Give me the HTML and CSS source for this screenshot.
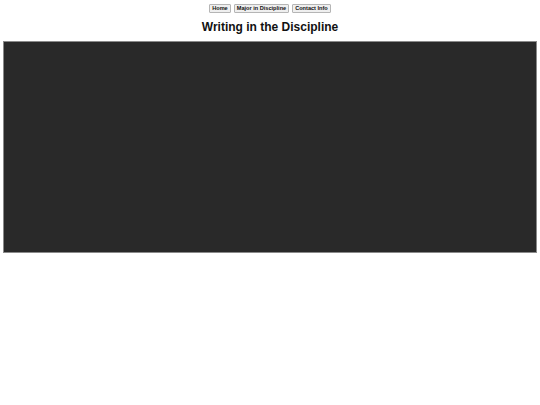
FILE: index.html
```html
<!DOCTYPE html>
<html>
<head>
<meta charset="utf-8">
<link rel="stylesheet" href="styles.css">
</head>
<body>
<nav class="nav">
  <button class="btn">Home</button>
  <button class="btn">Major in Discipline</button>
  <button class="btn">Contact Info</button>
</nav>
<h1 class="title">Writing in the Discipline</h1>
<div class="screen"></div>
</body>
</html>
```
FILE: styles.css
```css
html, body { margin: 0; padding: 0; background: #fff; }
body { font-family: "Liberation Sans", Arial, sans-serif; }
.nav {
  display: flex;
  justify-content: center;
  gap: 3px;
  padding-top: 4px;
}
.btn {
  font-family: "Liberation Sans", Arial, sans-serif;
  font-size: 5.6px;
  font-weight: bold;
  height: 9px;
  padding: 0 2px;
  margin: 0;
  line-height: 7px;
  border: 1px solid #b5b5b5;
  border-radius: 1px;
  background: #efefef;
  color: #111;
}
.title {
  margin: 7px 0 0;
  text-align: center;
  font-family: "Liberation Sans", Arial, sans-serif;
  font-size: 12px;
  line-height: 14px;
  font-weight: bold;
  color: #111;
}
.screen {
  margin: 7px 3px 0;
  height: 210px;
  background: #292929;
  border: 1px solid #8a8a8a;
}
```
